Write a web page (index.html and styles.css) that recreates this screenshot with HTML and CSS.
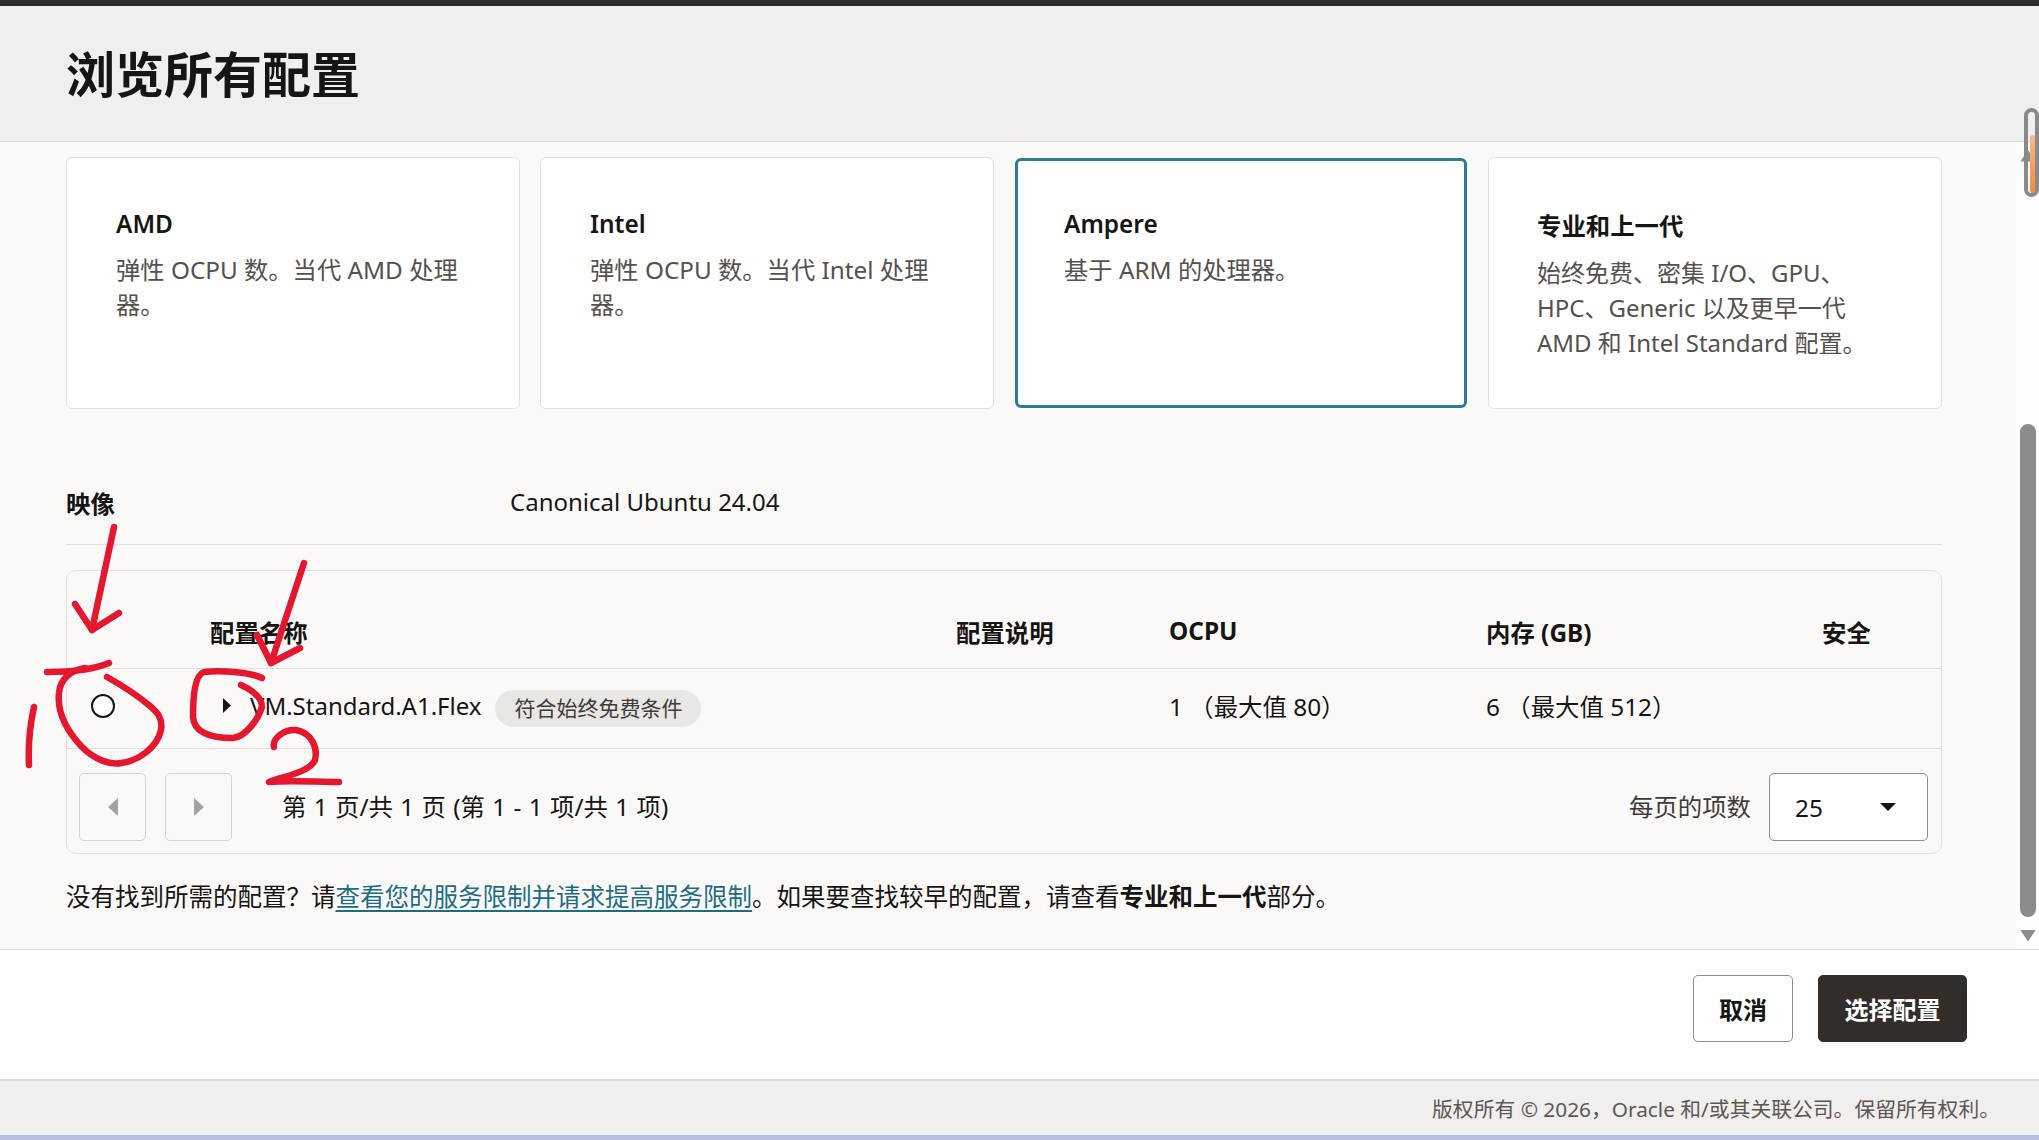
FILE: index.html
```html
<!DOCTYPE html>
<html lang="zh-CN">

<head>
    <meta charset="UTF-8">
    <title>浏览所有配置</title>
    <link rel="stylesheet" href="styles.css">
</head>

<body>
    <div class="top-bar"></div>

    <div class="panel-header">
        <h1>浏览所有配置</h1>
    </div>

    <div class="panel-body">
        <div class="content">
            <div class="card-list">
                <div class="card">
                    <div class="card-title">AMD</div>
                    <div class="card-desc">弹性 OCPU 数。当代 AMD 处理器。</div>
                </div>
                <div class="card">
                    <div class="card-title">Intel</div>
                    <div class="card-desc">弹性 OCPU 数。当代 Intel 处理器。</div>
                </div>
                <div class="card card-active">
                    <div class="card-title">Ampere</div>
                    <div class="card-desc">基于 ARM 的处理器。</div>
                </div>
                <div class="card card-cjk">
                    <div class="card-title">专业和上一代</div>
                    <div class="card-desc">始终免费、密集 I/O、GPU、<br>HPC、Generic 以及更早一代<br>AMD 和 Intel Standard 配置。</div>
                </div>
            </div>

            <div class="image-row">
                <div class="image-label">映像</div>
                <div class="image-value">Canonical Ubuntu 24.04</div>
            </div>

            <div class="shape-table">
                <div class="table-row table-head">
                    <div></div>
                    <div>配置名称</div>
                    <div>配置说明</div>
                    <div>OCPU</div>
                    <div>内存 (GB)</div>
                    <div>安全</div>
                </div>
                <div class="table-row table-item">
                    <div class="radio-cell"><span class="radio"></span></div>
                    <div class="name-cell">
                        <svg class="row-caret" viewBox="0 0 8 15"><path d="M0 0L8 7.5L0 15Z" /></svg>
                        <span class="shape-name">VM.Standard.A1.Flex</span>
                        <span class="badge">符合始终免费条件</span>
                    </div>
                    <div></div>
                    <div>1 （最大值 80）</div>
                    <div>6 （最大值 512）</div>
                    <div></div>
                </div>
                <div class="pager">
                    <button class="page-btn"><svg viewBox="0 0 10 18"><path d="M10 0L0 9L10 18Z" /></svg></button>
                    <button class="page-btn"><svg viewBox="0 0 10 18"><path d="M0 0L10 9L0 18Z" /></svg></button>
                    <div class="page-info">第 1 页/共 1 页 (第 1 - 1 项/共 1 项)</div>
                    <div class="page-size-label">每页的项数</div>
                    <div class="page-size">
                        <span>25</span>
                        <svg viewBox="0 0 16 8"><path d="M0 0H16L8 8Z" /></svg>
                    </div>
                </div>
            </div>

            <p class="note">没有找到所需的配置？请<a href="#">查看您的服务限制并请求提高服务限制</a>。如果要查找较早的配置，请查看<b>专业和上一代</b>部分。</p>
        </div>

        <div class="scrollbar">
            <svg class="scroll-arrow" viewBox="0 0 16 12"><path d="M8 0L16 12H0Z" /></svg>
            <div class="scroll-thumb"></div>
            <svg class="scroll-arrow" viewBox="0 0 16 12"><path d="M0 0H16L8 12Z" /></svg>
        </div>
    </div>

    <div class="actions">
        <button class="btn">取消</button>
        <button class="btn btn-primary">选择配置</button>
    </div>

    <div class="copyright">版权所有 © 2026，Oracle 和/或其关联公司。保留所有权利。</div>
    <div class="bottom-strip"></div>

    <!-- pill over the scrollbar -->
    <div class="scroll-pill"><div class="scroll-pill-fill"></div></div>

    <!-- red pen marks drawn on top of the page -->
    <svg class="pen-marks" viewBox="0 0 2039 1140">
        <path d="M114 527L92 630" />
        <path d="M75 604L92 630L119 613" />
        <path d="M304 563L271 663" />
        <path d="M257 635L271 663L300 648" />
        <path d="M47 672C60 672 90 671 109 663" />
        <path d="M85 668C70 670 60 680 59 693C57 712 66 730 82 747C95 760 110 765 121 763C138 761 157 748 161 730C163 718 157 712 150 706C138 696 125 687 107 677" />
        <path d="M34 707C30 725 28 745 29 765" />
        <path d="M262 678C250 672 220 670 204 672C195 675 193 695 193 717C194 730 205 738 233 738C245 737 258 720 262 707C262 697 252 690 241 685" />
        <path d="M274 747C272 738 285 729 296 730C312 733 318 748 315 760C310 772 285 776 269 782C290 780 315 782 339 782" />
    </svg>
</body>

</html>
```

FILE: styles.css
```css
* {
    margin: 0;
    padding: 0;
    box-sizing: border-box;
}

html,
body {
    height: 100%;
    overflow: hidden;
}

body {
    display: flex;
    flex-direction: column;
    background-color: #fff;
    color: #161513;
    font-family: "Noto Sans", "Noto Sans CJK SC", sans-serif;
    font-size: 24.4px;
}

.top-bar {
    height: 6px;
    background-color: #312d2a;
}

.panel-header {
    height: 136px;
    padding-left: 66px;
    display: flex;
    align-items: center;
    background-color: #f1efed;
    border-bottom: 1px solid #dcdad7;
}

.panel-header h1 {
    font-size: 49px;
    font-weight: 700;
    line-height: 60px;
}

.panel-body {
    height: 808px;
    display: flex;
    background-color: #fbf9f8;
    border-bottom: 1px solid #e6e4e1;
}

.content {
    flex: 1;
    padding: 15px 74px 0 66px;
}

.card-list {
    display: grid;
    grid-template-columns: repeat(4, 1fr);
    gap: 20px;
}

.card {
    height: 252px;
    padding: 49px 36px 0 49px;
    background-color: #fff;
    border: 1px solid #e2dfdc;
    border-radius: 6px;
}

.card-active {
    height: 250px;
    margin: 1px;
    border: 3px solid #2c7a9c;
    padding: 46px 34px 0 46px;
}

.card-title {
    font-weight: 600;
    line-height: 34px;
}

.card-desc {
    margin-top: 11px;
    color: #55514d;
    font-size: 24.3px;
    line-height: 35px;
}

.card-cjk {
    padding-left: 48px;
}

.card-cjk .card-title {
    font-weight: 700;
    line-height: 38px;
}

.card-cjk .card-desc {
    margin-top: 10px;
    font-size: 24px;
}

.image-row {
    height: 136px;
    padding-top: 75px;
    display: flex;
    border-bottom: 1px solid #e2dfdc;
}

.image-label {
    width: 444px;
    font-weight: 700;
    line-height: 40px;
}

.image-value {
    font-size: 24px;
    line-height: 36px;
}

.shape-table {
    margin-top: 25px;
    height: 284px;
    border: 1px solid #e2dfdc;
    border-radius: 10px;
}

.table-row {
    display: grid;
    grid-template-columns: 143px 746px 213px 317px 336px 1fr;
    border-bottom: 1px solid #e2dfdc;
}

.table-head {
    height: 98px;
    padding-top: 43px;
    font-weight: 700;
}

.table-item {
    height: 80px;
    padding-bottom: 6px;
    align-items: center;
}

.radio-cell {
    padding-left: 24px;
    display: flex;
}

.radio {
    width: 24px;
    height: 24px;
    border: 2px solid #161513;
    border-radius: 50%;
    background-color: #fff;
}

.name-cell {
    display: flex;
    align-items: center;
}

.row-caret {
    width: 8px;
    height: 15px;
    margin: 0 19px 0 13px;
    fill: #161513;
}

.shape-name {
    font-size: 24px;
}

.badge {
    margin: 5px 0 0 14px;
    padding: 0 19px;
    height: 37px;
    line-height: 37px;
    font-size: 21px;
    color: #3f3b38;
    background-color: #e9e7e4;
    border-radius: 19px;
}

.pager {
    height: 104px;
    padding: 24px 13px 0 12px;
    display: flex;
    align-items: flex-start;
}

.page-btn {
    width: 67px;
    height: 68px;
    margin-right: 19px;
    display: flex;
    align-items: center;
    justify-content: center;
    background-color: transparent;
    border: 1px solid #d6d3d0;
    border-radius: 5px;
}

.page-btn svg {
    width: 10px;
    height: 18px;
    fill: #a4a29f;
}

.page-info {
    flex: 1;
    margin-left: 31px;
    line-height: 68px;
    word-spacing: 1px;
}

.page-size-label {
    color: #3f3b38;
    line-height: 68px;
    margin-right: 18px;
}

.page-size {
    width: 159px;
    height: 68px;
    padding: 0 31px 0 25px;
    display: flex;
    align-items: center;
    justify-content: space-between;
    background-color: #fff;
    border: 1px solid #8f8c89;
    border-radius: 5px;
}

.page-size svg {
    width: 16px;
    height: 8px;
    fill: #161513;
}

.note {
    margin-top: 25px;
    font-size: 24.5px;
    line-height: 36px;
}

.note a {
    color: #1b6d84;
    text-decoration: underline;
    text-decoration-thickness: 2px;
    text-underline-offset: 4px;
}

.scrollbar {
    width: 23px;
    padding: 8px 3px 8px 4px;
    display: flex;
    flex-direction: column;
    align-items: stretch;
    background-color: #fdfdfd;
}

.scroll-arrow {
    width: 16px;
    height: 12px;
    fill: #8c8c8c;
}

.scroll-thumb {
    flex: 0 0 493px;
    margin: 262px 0 13px;
    background-color: #8c8c8c;
    border-radius: 8px;
}

.actions {
    height: 131px;
    padding-top: 25px;
    padding-right: 72px;
    display: flex;
    justify-content: flex-end;
    gap: 25px;
    background-color: #fff;
    border-bottom: 2px solid #e0dedb;
}

.btn {
    width: 100px;
    height: 67px;
    font-family: inherit;
    font-size: 24px;
    font-weight: 700;
    color: #161513;
    background-color: #fff;
    border: 1px solid #8f8c89;
    border-radius: 5px;
}

.btn-primary {
    width: 149px;
    color: #fff;
    background-color: #312d2a;
    border-color: #312d2a;
}

.copyright {
    height: 54px;
    padding-right: 39px;
    text-align: right;
    font-size: 20.8px;
    line-height: 57px;
    color: #5b5754;
    background-color: #f1efed;
}

.bottom-strip {
    flex: 1;
    background-color: #b7c0dc;
}

.scroll-pill {
    position: absolute;
    left: 2024px;
    top: 108px;
    width: 15px;
    height: 89px;
    border: 4px solid #8a8a8a;
    border-radius: 8px;
}

.scroll-pill-fill {
    position: absolute;
    left: 2px;
    top: 23px;
    width: 5px;
    height: 58px;
    background: linear-gradient(#f8b888, #f58b3c);
    border-radius: 3px;
}

.pen-marks {
    position: absolute;
    left: 0;
    top: 0;
    width: 2039px;
    height: 1140px;
    fill: none;
    stroke: #e3172f;
    stroke-width: 6.5;
    stroke-linecap: round;
    stroke-linejoin: round;
    pointer-events: none;
}
```
